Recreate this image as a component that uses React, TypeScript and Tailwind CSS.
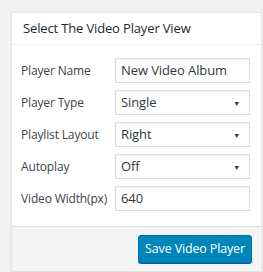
import React from 'react'

const Arrow = () => (
  <span className="absolute right-[9px] top-1/2 -translate-y-1/2 text-[7px] leading-none text-[#32373c]">▼</span>
)

const rows = [
  { label: 'Player Name', value: 'New Video Album', select: false },
  { label: 'Player Type', value: 'Single', select: true },
  { label: 'Playlist Layout', value: 'Right', select: true },
  { label: 'Autoplay', value: 'Off', select: true },
  { label: 'Video Width(px)', value: '640', select: false },
]

const App = () => {
  return (
    <div className="w-[263px] h-[272px] bg-[#f1f1f1] pt-[12px] pl-[11px] font-['Open_Sans',sans-serif] overflow-hidden">
      <div className="w-[251px] bg-white border border-[#e5e5e5] shadow-[0_1px_1px_rgba(0,0,0,0.04)]">
        <div className="h-[32px] px-[11px] flex items-center border-b border-[#eeeeee] text-[13px] text-[#23282d] tracking-[-0.15px]">
          Select The Video Player View
        </div>
        <div className="flex flex-col gap-[7px] pt-[13px] pb-[15px] pl-[9px] pr-[11px]">
          {rows.map((r) => (
            <div key={r.label} className="flex items-center">
              <span className="w-[94px] text-[12px] text-[#3c434a] tracking-[-0.15px]">{r.label}</span>
              <div className="relative w-[135px] h-[25px] border border-[#dddddd] bg-white flex items-center px-[5px] text-[13px] text-[#32373c] tracking-[-0.1px] shadow-[inset_0_1px_2px_rgba(0,0,0,0.07)]">
                {r.value}
                {r.select && <Arrow />}
              </div>
            </div>
          ))}
        </div>
        <div className="border-t border-[#dddddd] bg-[#f5f5f5] flex justify-end pt-[8px] pb-[8px] pr-[9px]">
          <button className="h-[28px] w-[114px] rounded-[3px] bg-[#0085ba] border border-[#0073aa] text-white text-[12.5px] tracking-[-0.15px] shadow-[0_1px_0_#006799]">
            Save Video Player
          </button>
        </div>
      </div>
    </div>
  )
}

export default App
